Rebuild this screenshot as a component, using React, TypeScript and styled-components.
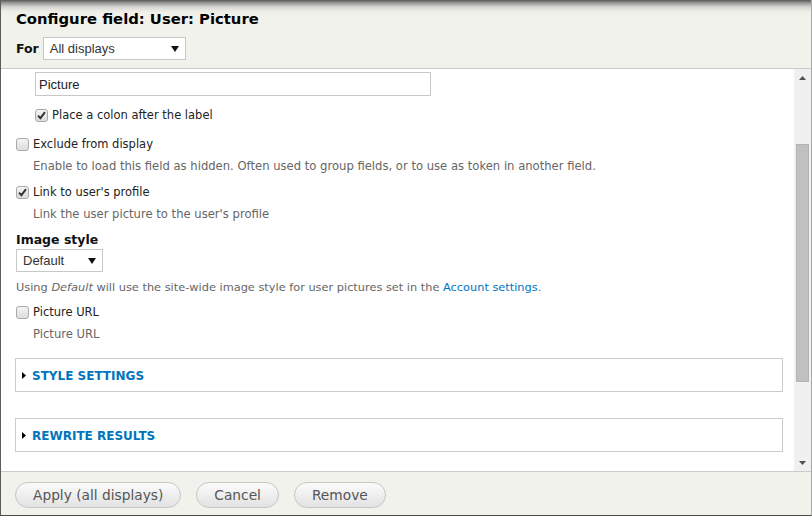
import React from "react";
import styled, { createGlobalStyle } from "styled-components";

const GlobalStyle = createGlobalStyle`
  html, body { margin: 0; padding: 0; background: #fff; }
  body { font-family: "DejaVu Sans", Verdana, sans-serif; }
  * { box-sizing: border-box; }
`;

const Dialog = styled.div`
  width: 812px;
  height: 516px;
  display: flex;
  flex-direction: column;
  border-left: 1px solid #5c5c5c;
  border-right: 1px solid #a8a8a8;
  border-bottom: 1px solid #4a4a4a;
  overflow: hidden;
`;

const Header = styled.div`
  height: 69px;
  flex: none;
  padding: 9px 15px 0;
  border-bottom: 1px solid #cbcbc7;
  background: linear-gradient(
    to bottom,
    #585858 0px,
    #9a9a97 3px,
    #d6d6d1 7px,
    #ecebe6 11px,
    #f2f2ec 14px,
    #f2f2ec 100%
  );
`;

const Title = styled.h1`
  margin: 0;
  font-family: "DejaVu Sans", Verdana, sans-serif;
  font-weight: bold;
  font-size: 14.8px;
  line-height: 20px;
  color: #000;
`;

const ForRow = styled.div`
  display: flex;
  align-items: center;
  gap: 4px;
  margin-top: 8px;
`;

const ForLabel = styled.span`
  font-weight: bold;
  font-size: 12.5px;
  color: #111;
`;

const Select = styled.div<{ $w: number }>`
  width: ${(p) => p.$w}px;
  height: 23px;
  display: flex;
  align-items: center;
  justify-content: space-between;
  padding: 0 6px 0 6px;
  background: #fff;
  border: 1px solid #c8c8c8;
  font-family: "Liberation Sans", Arial, sans-serif;
  font-size: 13px;
  color: #333;
`;

const Body = styled.div`
  flex: 1;
  display: flex;
  min-height: 0;
`;

const Content = styled.div`
  flex: 1;
  min-width: 0;
  overflow: hidden;
  background: #fff;
  padding: 3px 0 0 15px;
`;

const TextInput = styled.div`
  width: 396px;
  height: 24px;
  margin-left: 19px;
  border: 1px solid #c8c8c8;
  display: flex;
  align-items: center;
  padding-left: 3px;
  font-family: "Liberation Sans", Arial, sans-serif;
  font-size: 13px;
  color: #222;
`;

const CheckRow = styled.div<{ $mt: number; $indent?: number }>`
  height: 22px;
  margin-top: ${(p) => p.$mt}px;
  margin-left: ${(p) => p.$indent ?? 0}px;
  display: flex;
  align-items: center;
  gap: 4px;
  font-size: 11.5px;
  color: #222;
`;

const Box = styled.span`
  width: 13px;
  height: 13px;
  flex: none;
  border: 1px solid #a9a9a9;
  border-radius: 3px;
  background: linear-gradient(to bottom, #f4f4f4, #dcdcdc);
  display: flex;
  align-items: center;
  justify-content: center;
`;

const Desc = styled.div`
  height: 22px;
  display: flex;
  align-items: center;
  padding-left: 17px;
  font-size: 11.6px;
  color: #666;
`;

const Heading = styled.div`
  height: 20px;
  margin-top: 4px;
  display: flex;
  align-items: center;
  font-weight: bold;
  font-size: 12.5px;
  color: #111;
`;

const Help = styled.div`
  height: 20px;
  margin-top: 5px;
  display: flex;
  align-items: center;
  white-space: pre;
  font-size: 11.35px;
  color: #666;
  em { font-style: italic; }
`;

const Link = styled.a`
  color: #0074bd;
  text-decoration: none;
`;

const Fieldset = styled.div<{ $mt: number }>`
  width: 768px;
  height: 34px;
  margin-top: ${(p) => p.$mt}px;
  margin-left: -1px;
  border: 1px solid #cccccc;
  display: flex;
  align-items: center;
  padding: 1px 0 0 6px;
  gap: 6px;
`;

const Legend = styled.span`
  font-weight: bold;
  font-size: 12px;
  text-transform: uppercase;
  color: #0074bd;
`;

const Scrollbar = styled.div`
  width: 17px;
  flex: none;
  background: #f0f0f0;
  display: flex;
  flex-direction: column;
  align-items: center;
`;

const ArrowCell = styled.div`
  height: 17px;
  flex: none;
  display: flex;
  align-items: center;
  justify-content: center;
`;

const Track = styled.div`
  flex: 1;
  width: 100%;
  display: flex;
  flex-direction: column;
  align-items: center;
`;

const Thumb = styled.div`
  width: 13px;
  height: 238px;
  margin-top: 58px;
  background: #c0c0c0;
  border: 1px solid #b4b4b4;
`;

const Footer = styled.div`
  height: 44px;
  flex: none;
  border-top: 1px solid #cbcbc7;
  background: #f2f2ec;
  display: flex;
  align-items: flex-start;
  gap: 15px;
  padding: 10px 0 0 14px;
`;

const Button = styled.button`
  height: 26px;
  padding: 0 17px;
  border: 1px solid #c6c6c6;
  border-radius: 14px;
  background: linear-gradient(to bottom, #fbfbfb 0%, #ececec 60%, #e2e2e2 100%);
  font-family: "DejaVu Sans", Verdana, sans-serif;
  font-size: 13.75px;
  color: #555;
  display: flex;
  align-items: center;
  cursor: pointer;
`;

const Tri = ({ dir }: { dir: "down" | "up" | "right" }) => {
  if (dir === "right")
    return (
      <svg width="4" height="7" viewBox="0 0 4 7">
        <path d="M0 0 L4 3.5 L0 7 Z" fill="#000" />
      </svg>
    );
  if (dir === "up")
    return (
      <svg width="7" height="4" viewBox="0 0 7 4">
        <path d="M0 4 L3.5 0 L7 4 Z" fill="#505050" />
      </svg>
    );
  return (
    <svg width="8" height="6" viewBox="0 0 8 6">
      <path d="M0 0 L8 0 L4 6 Z" fill="#111" />
    </svg>
  );
};

const DownSmall = () => (
  <svg width="7" height="4" viewBox="0 0 7 4">
    <path d="M0 0 L7 0 L3.5 4 Z" fill="#505050" />
  </svg>
);

const Check = () => (
  <svg width="9" height="9" viewBox="0 0 9 9">
    <path d="M1 4.6 L3.4 7.2 L8 1.2" stroke="#333" strokeWidth="1.9" fill="none" />
  </svg>
);

const Checkbox = ({ checked }: { checked?: boolean }) => <Box>{checked ? <Check /> : null}</Box>;

export default function App() {
  return (
    <>
      <GlobalStyle />
      <Dialog>
        <Header>
          <Title>Configure field: User: Picture</Title>
          <ForRow>
            <ForLabel>For</ForLabel>
            <Select $w={143}>
              <span>All displays</span>
              <Tri dir="down" />
            </Select>
          </ForRow>
        </Header>
        <Body>
          <Content>
            <TextInput>Picture</TextInput>
            <CheckRow $mt={8} $indent={19}>
              <Checkbox checked />
              <span>Place a colon after the label</span>
            </CheckRow>
            <CheckRow $mt={7}>
              <Checkbox />
              <span>Exclude from display</span>
            </CheckRow>
            <Desc>
              Enable to load this field as hidden. Often used to group fields, or to use as token in another field.
            </Desc>
            <CheckRow $mt={4}>
              <Checkbox checked />
              <span>Link to user's profile</span>
            </CheckRow>
            <Desc>Link the user picture to the user's profile</Desc>
            <Heading>Image style</Heading>
            <Select $w={87}>
              <span>Default</span>
              <Tri dir="down" />
            </Select>
            <Help>
              Using <em>Default</em> will use the site-wide image style for user pictures set in the{" "}
              <Link href="#">Account settings</Link>.
            </Help>
            <CheckRow $mt={4}>
              <Checkbox />
              <span>Picture URL</span>
            </CheckRow>
            <Desc>Picture URL</Desc>
            <Fieldset $mt={13}>
              <Tri dir="right" />
              <Legend>Style settings</Legend>
            </Fieldset>
            <Fieldset $mt={26}>
              <Tri dir="right" />
              <Legend>Rewrite results</Legend>
            </Fieldset>
          </Content>
          <Scrollbar>
            <ArrowCell>
              <Tri dir="up" />
            </ArrowCell>
            <Track>
              <Thumb />
            </Track>
            <ArrowCell>
              <DownSmall />
            </ArrowCell>
          </Scrollbar>
        </Body>
        <Footer>
          <Button>Apply (all displays)</Button>
          <Button>Cancel</Button>
          <Button>Remove</Button>
        </Footer>
      </Dialog>
    </>
  );
}
